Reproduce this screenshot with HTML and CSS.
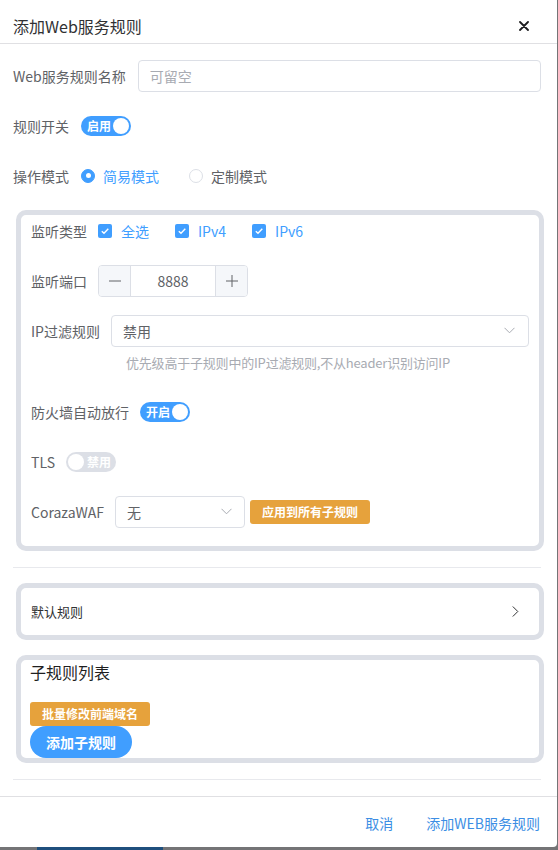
FILE: index.html
```html
<!DOCTYPE html>
<html lang="zh-CN">
<head>
<meta charset="utf-8">
<title>添加Web服务规则</title>
<link rel="stylesheet" href="styles.css">
</head>
<body>
<div class="dialog">
  <header class="dlg-header">
    <span class="dlg-title">添加Web服务规则</span>
    <span class="close"><svg width="10" height="10" viewBox="0 0 10 10"><path d="M1 1L9 9M9 1L1 9" stroke="#1d1d1f" stroke-width="1.8" stroke-linecap="round"/></svg></span>
  </header>
  <div class="dlg-body">
    <div class="form-item">
      <span class="label">Web服务规则名称</span>
      <div class="input grow"><span class="placeholder">可留空</span></div>
    </div>
    <div class="form-item">
      <span class="label">规则开关</span>
      <span class="switch on"><span class="sw-text">启用</span><span class="knob"></span></span>
    </div>
    <div class="form-item">
      <span class="label">操作模式</span>
      <span class="radio checked"><span class="radio-dot"></span><span class="radio-text">简易模式</span></span>
      <span class="radio"><span class="radio-dot"></span><span class="radio-text">定制模式</span></span>
    </div>

    <div class="card card-main">
      <div class="form-item">
        <span class="label">监听类型</span>
        <span class="checkbox"><span class="cb-box"><svg width="14" height="14" viewBox="0 0 14 14"><path d="M3.8 7.2L6 9.3L10.3 4.8" fill="none" stroke="#fff" stroke-width="1.4"/></svg></span><span class="cb-text">全选</span></span>
        <span class="checkbox"><span class="cb-box"><svg width="14" height="14" viewBox="0 0 14 14"><path d="M3.8 7.2L6 9.3L10.3 4.8" fill="none" stroke="#fff" stroke-width="1.4"/></svg></span><span class="cb-text">IPv4</span></span>
        <span class="checkbox"><span class="cb-box"><svg width="14" height="14" viewBox="0 0 14 14"><path d="M3.8 7.2L6 9.3L10.3 4.8" fill="none" stroke="#fff" stroke-width="1.4"/></svg></span><span class="cb-text">IPv6</span></span>
      </div>
      <div class="form-item">
        <span class="label">监听端口</span>
        <div class="num-input">
          <span class="num-btn minus"><svg width="12" height="12" viewBox="0 0 12 12"><path d="M0 6H12" stroke="#606266" stroke-width="1"/></svg></span>
          <span class="num-val">8888</span>
          <span class="num-btn plus"><svg width="12" height="12" viewBox="0 0 12 12"><path d="M0 6H12M6 0V12" stroke="#606266" stroke-width="1"/></svg></span>
        </div>
      </div>
      <div class="form-item tight">
        <span class="label">IP过滤规则</span>
        <div class="select grow"><span class="sel-val">禁用</span><svg class="chev" width="11" height="7" viewBox="0 0 11 7"><path d="M0.5 0.8L5.5 5.8L10.5 0.8" fill="none" stroke="#a8abb2" stroke-width="1"/></svg></div>
      </div>
      <div class="help">优先级高于子规则中的IP过滤规则,不从header识别访问IP</div>
      <div class="form-item">
        <span class="label">防火墙自动放行</span>
        <span class="switch on"><span class="sw-text">开启</span><span class="knob"></span></span>
      </div>
      <div class="form-item">
        <span class="label">TLS</span>
        <span class="switch off"><span class="knob"></span><span class="sw-text">禁用</span></span>
      </div>
      <div class="form-item">
        <span class="label">CorazaWAF</span>
        <div class="select waf"><span class="sel-val">无</span><svg class="chev" width="11" height="7" viewBox="0 0 11 7"><path d="M0.5 0.8L5.5 5.8L10.5 0.8" fill="none" stroke="#a8abb2" stroke-width="1"/></svg></div>
        <span class="btn-warn apply">应用到所有子规则</span>
      </div>
    </div>

    <div class="divider"></div>

    <div class="card card-collapse">
      <span class="collapse-title">默认规则</span>
      <svg width="7" height="11" viewBox="0 0 7 11"><path d="M0.8 0.5L5.8 5.5L0.8 10.5" fill="none" stroke="#303133" stroke-width="1"/></svg>
    </div>

    <div class="card card-sub">
      <div class="sub-title">子规则列表</div>
      <div class="btn-col">
        <span class="btn-warn">批量修改前端域名</span>
        <span class="btn-primary">添加子规则</span>
      </div>
    </div>

    <div class="divider last"></div>
  </div>
  <footer class="dlg-footer">
    <span class="text-btn">取消</span>
    <span class="text-btn">添加WEB服务规则</span>
  </footer>
</div>
<div class="strip"><span class="strip-blue"></span></div>
</body>
</html>
```

FILE: styles.css
```css
* { box-sizing: border-box; }
html, body { margin: 0; padding: 0; }
body {
  width: 558px;
  height: 850px;
  overflow: hidden;
  background: #747476;
  font-family: "Noto Sans CJK SC", "Noto Sans", sans-serif;
  color: #606266;
}
.dialog {
  width: 557px;
  height: 847px;
  background: #fff;
  border-bottom-right-radius: 4px;
  display: flex;
  flex-direction: column;
}
.dlg-header {
  height: 44px;
  padding: 14px 28px 0 13px;
  border-bottom: 1px solid #e0e0e3;
  display: flex;
  justify-content: space-between;
}
.dlg-title {
  font-size: 16px;
  line-height: 24px;
  color: #303133;
}
.close {
  display: flex;
  align-items: center;
  height: 24px;
}
.dlg-body {
  flex: 1;
  padding: 16px 16px 16px 13px;
  display: flex;
  flex-direction: column;
}
.form-item {
  display: flex;
  align-items: center;
  height: 32px;
  margin-bottom: 18px;
}
.form-item.tight { margin-bottom: 0; }
.label {
  font-size: 14px;
  line-height: 32px;
  color: #606266;
  padding-right: 12px;
  white-space: nowrap;
}
.grow { flex: 1; }
.input, .select {
  height: 32px;
  border: 1px solid #dcdfe6;
  border-radius: 4px;
  display: flex;
  align-items: center;
  padding: 0 11px;
  font-size: 14px;
}
.placeholder { color: #a8abb2; }
.select { justify-content: space-between; padding-right: 13px; }
.sel-val { color: #606266; }
.select.waf { width: 130px; padding-right: 12px; }

/* switch */
.switch {
  position: relative;
  width: 50px;
  height: 20px;
  border-radius: 10px;
  display: flex;
  align-items: center;
  padding: 0 2px;
}
.switch.on { background: #409eff; justify-content: space-between; padding-left: 6px; }
.switch.off { background: #dcdfe6; padding-left: 2px; }
.sw-text {
  color: #fff;
  font-size: 12px;
  font-weight: 700;
  line-height: 20px;
}
.switch.off .sw-text { margin-left: 3px; }
.knob {
  width: 16px;
  height: 16px;
  border-radius: 50%;
  background: #fff;
}

/* radio */
.radio {
  display: flex;
  align-items: center;
  margin-right: 30px;
  font-size: 14px;
}
.radio-dot {
  width: 14px;
  height: 14px;
  border-radius: 50%;
  border: 1px solid #dcdfe6;
  background: #fff;
  display: flex;
  align-items: center;
  justify-content: center;
}
.radio.checked .radio-dot { background: #409eff; border-color: #409eff; }
.radio.checked .radio-dot::after {
  content: "";
  width: 5px;
  height: 5px;
  border-radius: 50%;
  background: #fff;
}
.radio-text { padding-left: 8px; color: #606266; }
.radio.checked .radio-text { color: #409eff; }

/* card */
.card {
  border: 5px solid #dcdfe6;
  border-radius: 10px;
  margin: 0 -3px 0 3px;
}
.card-main { padding: 0 10px; }
.card-main .label { padding-right: 11px; }
.card-main .form-item:last-child { margin-bottom: 18px; }

.checkbox {
  display: flex;
  align-items: center;
  margin-right: 26px;
  font-size: 14px;
}
.cb-box {
  width: 14px;
  height: 14px;
  border-radius: 2px;
  background: #409eff;
  display: flex;
}
.cb-text { padding-left: 9px; color: #409eff; }

.num-input {
  width: 150px;
  height: 32px;
  border: 1px solid #dcdfe6;
  border-radius: 4px;
  display: flex;
  overflow: hidden;
}
.num-btn {
  width: 32px;
  background: #f5f7fa;
  display: flex;
  align-items: center;
  justify-content: center;
}
.num-btn.minus { border-right: 1px solid #dcdfe6; }
.num-btn.plus { border-left: 1px solid #dcdfe6; }
.num-val {
  flex: 1;
  text-align: center;
  font-size: 14px;
  line-height: 30px;
  color: #606266;
}
.help {
  margin-left: 95px;
  padding-top: 4px;
  height: 28px;
  margin-bottom: 21px;
  font-size: 13px;
  line-height: 24px;
  letter-spacing: -0.2px;
  color: #a8abb2;
}
.btn-warn {
  display: inline-flex;
  align-items: center;
  justify-content: center;
  width: 120px;
  height: 24px;
  border-radius: 3px;
  background: #e6a23c;
  color: #fff;
  font-size: 12px;
  font-weight: 700;
}
.apply { margin-left: 5px; }

.divider {
  height: 1px;
  background: #e8e9ed;
  margin: 16px 0 15px;
  flex-shrink: 0;
}
.divider.last { margin-bottom: 0; }

.card-collapse {
  height: 57px;
  padding: 0 20px 0 10px;
  display: flex;
  align-items: center;
  justify-content: space-between;
  margin-bottom: 15px;
}
.collapse-title {
  font-size: 13px;
  color: #303133;
  line-height: 20px;
  padding-top: 1px;
}

.card-sub { padding: 0 9px; }
.sub-title {
  font-size: 16px;
  line-height: 24px;
  color: #1f1f1f;
  margin-bottom: 18px;
}
.btn-col {
  display: flex;
  flex-direction: column;
  align-items: flex-start;
}
.btn-primary {
  display: inline-flex;
  align-items: center;
  height: 32px;
  padding: 0 16px;
  border-radius: 16px;
  background: #409eff;
  color: #fff;
  font-size: 14px;
  font-weight: 700;
}

.dlg-footer {
  height: 52px;
  border-top: 1px solid #e0e0e3;
  padding: 14px 17px 0 0;
  display: flex;
  justify-content: flex-end;
  gap: 33px;
}
.text-btn {
  font-size: 14px;
  line-height: 24px;
  color: #3c8ee4;
}
.strip {
  height: 3px;
  display: flex;
}
.strip-blue {
  margin-left: 37px;
  width: 126px;
  background: #1f4f7d;
}
```
